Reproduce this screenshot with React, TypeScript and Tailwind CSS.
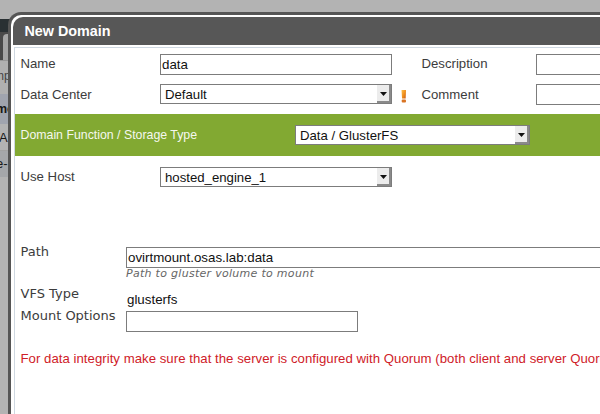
import React from "react";

function Select({ value, className = "" }: { value: string; className?: string }) {
  return (
    <div className={`flex h-5 w-[232px] shrink-0 items-stretch border border-[#7c7c7c] bg-white ${className}`}>
      <span className="flex-1 pl-1 text-[13.2px] leading-[19px] text-[#111]">{value}</span>
      <span className="flex w-[14px] items-center justify-center border-r-2 border-b-2 border-[#8a8a8a] bg-[#ececec]">
        <svg width="7" height="4" viewBox="0 0 7 4" className="mt-px">
          <path d="M0 0H7L3.5 4Z" fill="#111" />
        </svg>
      </span>
    </div>
  );
}

function Field({ value = "", className = "" }: { value?: string; className?: string }) {
  return (
    <div className={`h-[21px] shrink-0 border border-[#7c7c7c] bg-white pl-px text-[13.33px] leading-[20px] text-[#111] ${className}`}>
      {value}
    </div>
  );
}

function Page() {
  return (
    <div className="flex h-[414px] w-[600px] flex-col bg-[#b3b3b3] text-[12.5px] text-[#181818]">
      <div className="h-[19px] shrink-0" />
      <div className="h-[13px] shrink-0 bg-[#293033]" />
      <div className="flex h-[28px] shrink-0 bg-[#494949]">
        <div className="ml-[3px] mt-[2px] flex-1 rounded-tl-sm bg-[#a5a5a5]" />
      </div>
      <div className="h-[34px] shrink-0 border-t border-[#969696] bg-[#b0b0b0] pt-[6px] text-[12px] text-[#444]">
        <span className="-ml-[6px]">mp</span>
      </div>
      <div className="h-[30px] shrink-0 bg-[#a0a4ae] pt-[6px] font-bold">
        <span className="-ml-[4px]">me</span>
      </div>
      <div className="h-[26px] shrink-0 bg-[#b3b3b3] pt-[4px] text-[13px]">
        <span className="-ml-px">A</span>
      </div>
      <div className="h-[27px] shrink-0 border-t border-[#a2a2a2] bg-[#a5a7aa] pt-[3px] text-[13px]">
        <span className="-ml-[4px]">e-</span>
      </div>
    </div>
  );
}

export default function App() {
  return (
    <div className="relative h-[414px] w-[600px] overflow-hidden font-['Liberation_Sans',Arial,sans-serif]">
      <Page />
      <div className="absolute top-3 left-2 h-[420px] w-[640px] rounded-tl-[13px] border-t-[3px] border-l-[3px] border-[#555] bg-white pt-[2px] pl-[2px]">
        <div className="flex h-[28px] items-center rounded-tl-[10px] bg-[#575757] pl-[11.5px] pt-[2px] text-[14.35px] font-bold text-white">
          New Domain
        </div>
        <div className="ml-px mt-[2px] h-[380px] border-t border-l border-[#cfd8e1] text-[13.2px] leading-[20px] text-[#3c3c3c]">
          <div className="flex h-[37px] pt-[6px] pl-[5.5px]">
            <span className="w-[139.5px] shrink-0">Name</span>
            <Field value="data" className="w-[232px]" />
            <span className="ml-[29.5px] w-[114.5px] shrink-0">Description</span>
            <Field className="w-[120px]" />
          </div>
          <div className="flex h-[29px] pl-[5.5px]">
            <span className="w-[139.5px] shrink-0">Data Center</span>
            <Select value="Default" className="-mt-px" />
            <span className="flex w-[29.5px] shrink-0 justify-center pt-[5px]">
              <svg width="6" height="13" viewBox="0 0 6 13" className="-ml-[5px]">
                <defs>
                  <linearGradient id="warn" x1="0" x2="1" y1="0" y2="1">
                    <stop offset="0" stopColor="#ffc04b" />
                    <stop offset="0.55" stopColor="#ee8d1c" />
                    <stop offset="1" stopColor="#c85a16" />
                  </linearGradient>
                </defs>
                <path d="M.5 0H5L4.7 8.5H1Z" fill="url(#warn)" />
                <rect x=".7" y="9.5" width="4.3" height="3" rx="1" fill="#d97424" />
              </svg>
            </span>
            <span className="w-[114.5px] shrink-0">Comment</span>
            <Field className="-mt-px w-[120px]" />
          </div>
          <div className="flex h-[42px] bg-[#82a932] pt-[11px] pl-[5.5px] text-[12.33px] text-[#f5f8ef]">
            <span className="w-[274.5px] shrink-0">Domain Function / Storage Type</span>
            <Select value="Data / GlusterFS" className="w-[235px]" />
          </div>
          <div className="flex h-[91px] pt-[11px] pl-[5.5px]">
            <span className="w-[139.5px] shrink-0">Use Host</span>
            <Select value="hosted_engine_1" />
          </div>
          <div className="flex h-[42px] pl-[5.5px]">
            <span className="w-[105.5px] shrink-0 -mt-[5px] font-['DejaVu_Sans',sans-serif] text-[13px]">Path</span>
            <div>
              <Field value="ovirtmount.osas.lab:data" className="w-[520px]" />
              <p className="font-['DejaVu_Sans',sans-serif] text-[11px] leading-[12px] tracking-[0.29px] text-[#666] italic">Path to gluster volume to mount</p>
            </div>
          </div>
          <div className="flex h-[22px] pl-[5.5px]">
            <span className="w-[105.5px] shrink-0 -mt-[5px] font-['DejaVu_Sans',sans-serif] text-[13px]">VFS Type</span>
            <span className="pt-px pl-px text-[13.33px] text-[#111]">glusterfs</span>
          </div>
          <div className="flex h-[38px] pl-[5.5px]">
            <span className="w-[105.5px] shrink-0 -mt-[5px] font-['DejaVu_Sans',sans-serif] text-[13px]">Mount Options</span>
            <Field className="w-[232px]" />
          </div>
          <p className="pl-[5.5px] whitespace-nowrap tracking-[0.03px] text-[#cf2028]">
            For data integrity make sure that the server is configured with Quorum (both client and server Quorum)
          </p>
        </div>
      </div>
    </div>
  );
}
